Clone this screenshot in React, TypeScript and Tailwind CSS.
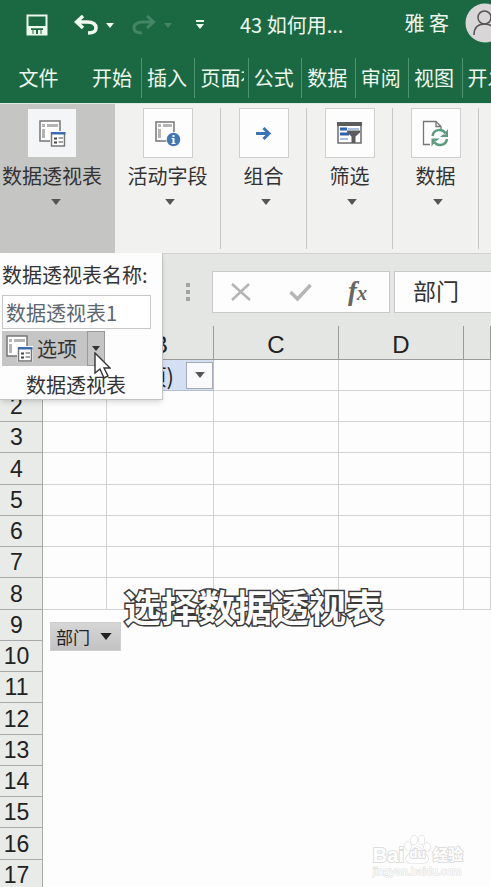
import React, { useState } from "react";

const tabs = ["插入", "页面布局", "公式", "数据", "审阅", "视图", "开发工具"];
const columns = ["A", "B", "C", "D", "E"];
const gridRows = [1, 2, 3, 4, 5, 6, 7, 8];
const chartRows = [9, 10, 11, 12, 13, 14, 15, 16, 17];

const Caret = ({ className = "w-2 h-[5px]" }: { className?: string }) => (
  <svg viewBox="0 0 8 5" className={`fill-current shrink-0 ${className}`}>
    <path d="M0 0h8L4 5z" />
  </svg>
);

const PivotIcon = () => (
  <svg viewBox="0 0 27 27" className="w-[27px] h-[27px] shrink-0" fill="none">
    <path d="M1 1h20v20H1z" fill="#fff" stroke="#767676" strokeWidth="1.5" />
    <path d="M3 4h3v3H3zM8 4h11v3H8zM3 9h3v9H3z" fill="#b4b4b4" />
    <path d="M11 11h16v16H11z" fill="#fff" />
    <path d="M12.500 13h13v13h-13z" fill="#fff" stroke="#767676" strokeWidth="1.5" />
    <path d="M12 12h14.500v2.500H12z" fill="#3c6cb0" />
    <path d="M15 18.500h3M15 22.500h3" stroke="#444" strokeWidth="2" />
    <path d="M19.500 18h4.500M19.500 22h4.500" stroke="#888" strokeWidth="1.500" />
  </svg>
);

const FieldIcon = () => (
  <svg viewBox="0 0 27 27" className="w-[27px] h-[27px]" fill="none">
    <path d="M2 2h18v19H2z" fill="#fff" stroke="#767676" strokeWidth="1.5" />
    <path d="M4 4h3v3H4zM9 4h9v3H9zM4 9h3v9H4z" fill="#b4b4b4" />
    <circle cx="19.500" cy="19.500" r="7.500" fill="#fff" />
    <circle cx="19.500" cy="19.500" r="6.800" fill="#3f78b5" />
    <path d="M18.500 15h2v2h-2zM17.500 18h3v5h1v1h-4v-1h1v-4h-1z" fill="#fff" />
  </svg>
);

const GroupIcon = () => (
  <svg viewBox="0 0 27 27" className="w-[27px] h-[27px]" fill="none" stroke="#3a74b4" strokeWidth="3">
    <path d="M6 13.500h13M13.500 8l5.500 5.500-5.500 5.500" />
  </svg>
);

const FilterIcon = () => (
  <svg viewBox="0 0 27 27" className="w-[27px] h-[27px]" fill="none">
    <path d="M2 3h23v20H2z" fill="#fff" stroke="#6c6c6c" strokeWidth="1.5" />
    <path d="M1 2h25v4H1z" fill="#5c5c5c" />
    <path d="M4 9h7M4 14h9" stroke="#2f62b5" strokeWidth="3" />
    <path d="M4 19h8M12 9h11" stroke="#a9bfe6" strokeWidth="2" />
    <path d="M11 10.500h13v2l-4.500 4V23h-4v-6.500l-4.500-4z" fill="#5c5c5c" />
  </svg>
);

const RefreshIcon = () => (
  <svg viewBox="0 0 27 27" className="w-[27px] h-[27px]" fill="none">
    <path d="M8 24.500H1.500V1.500H14l5 5V9M14 1.500v5h5" stroke="#777" strokeWidth="1.300" />
    <path d="M10.500 16a7 7 0 0 1 13-2.500M25 19a7 7 0 0 1-13 2.500" stroke="#5a9c7d" strokeWidth="2.500" />
    <path d="M26 9v8h-8l3-2.500h2.500V12zM9.500 26.500v-8h8l-3 2.500H12v2.500z" fill="#5a9c7d" />
  </svg>
);

const groups = [
  { label: "活动字段", icon: <FieldIcon />, width: "w-[106px]" },
  { label: "组合", icon: <GroupIcon />, width: "w-[86px]" },
  { label: "筛选", icon: <FilterIcon />, width: "w-[86px]" },
  { label: "数据", icon: <RefreshIcon />, width: "w-[86px]" },
];

const TitleBar = () => (
  <div className="h-[50px] flex items-center pl-[26px] overflow-hidden">
    <button aria-label="保存" className="shrink-0">
      <svg viewBox="0 0 22 22" className="w-[22px] h-[22px]" fill="none">
        <path d="M1.500 1.500h19v19h-19z" stroke="#eef7ee" strokeWidth="2" />
        <path d="M2 12h18v2.500H2zM2 14h3v7H2zM17 14h3v7h-3zM5 16h12v5H5z" fill="#eef7ee" />
        <path d="M5 14.500h12V16H5zM6.500 16h1v4h-1zM10 16h2v4h-2zM14.500 16h1v4h-1z" fill="#1b6943" />
      </svg>
    </button>
    <button aria-label="撤消" className="ml-[26px] flex items-center gap-2 text-[#f0f8f0] shrink-0">
      <svg viewBox="0 0 24 20" className="w-6 h-5" fill="none" stroke="currentColor" strokeWidth="3.500">
        <path d="M9 1L2.500 7L9 13M3 7h10c6 0 9 2 9 6s-3 5-8 5" />
      </svg>
      <Caret />
    </button>
    <button aria-label="恢复" className="ml-[18px] flex items-center gap-2 text-[#438565] shrink-0">
      <svg viewBox="0 0 24 20" className="w-6 h-5" fill="none" stroke="currentColor" strokeWidth="3">
        <path d="M15 1L21.500 7L15 13M21 7H11c-6 0-9 2-9 6s3 5 8 5" />
      </svg>
      <Caret />
    </button>
    <button aria-label="自定义快速访问工具栏" className="ml-6 text-[#eef7ee] shrink-0">
      <svg viewBox="0 0 8 10" className="w-2 h-[10px]" fill="currentColor">
        <path d="M0 0h8v2H0zM0 4h8L4 9z" />
      </svg>
    </button>
    <span className="ml-9 text-[20px] leading-7 text-[#eef7ee] whitespace-nowrap">43 如何用...</span>
    <span className="ml-auto mr-4 pb-1 text-[20px] leading-7 text-[#eef7ee] whitespace-nowrap">雅 客</span>
    <svg viewBox="0 0 40 40" className="w-10 h-10 -mr-[14px] -mt-1 shrink-0" fill="none" stroke="#555" strokeWidth="1.500">
      <circle cx="20" cy="20" r="19.500" fill="#d8d6d6" stroke="none" />
      <circle cx="19.500" cy="14.500" r="6.500" />
      <path d="M9 32c0-8 4-11 10.500-11S30 24 30 32" />
    </svg>
  </div>
);

const TabBar = () => (
  <nav className="h-[53px] flex pt-2 pb-[5px] text-[20px] leading-[36px] text-[#eef7ee] overflow-hidden">
    <button className="w-[77px] shrink-0">文件</button>
    <button className="w-16 pl-[15px] text-left shrink-0">开始</button>
    <div className="flex flex-1 -mr-6 min-w-0">
      {tabs.map((tab) => (
        <button
          key={tab}
          className="flex-1 min-w-0 border-l border-[#4f9470] pl-[5px] pr-1 text-left"
        >
          <span className="block overflow-hidden whitespace-nowrap">{tab}</span>
        </button>
      ))}
    </div>
  </nav>
);

const Ribbon = () => (
  <div className="h-[151px] flex bg-[#f1f1f0] border-t border-b border-t-[#dfe8e0] border-b-[#d2d2d2] text-[#333] text-[20px] overflow-hidden">
    <button className="w-[115px] shrink-0 bg-[#c5c5c4] pt-[5px] pr-[11px] flex flex-col items-center">
      <span className="w-12 h-12 bg-[#f4f5f6] flex items-center justify-center">
        <PivotIcon />
      </span>
      <span className="mt-1 leading-[30px] whitespace-nowrap">数据透视表</span>
      <Caret className="mt-2 ml-2 w-[10px] h-[6px] text-[#555]" />
    </button>
    {groups.map((group) => (
      <div key={group.label} className={`${group.width} shrink-0 border-r border-[#c6c6c6] my-1`}>
        <button className="w-full flex flex-col items-center">
          <span className="w-[50px] h-[50px] bg-[#fdfdfd] border border-[#cfcfcf] flex items-center justify-center">
            {group.icon}
          </span>
          <span className="mt-[3px] leading-[30px] whitespace-nowrap">{group.label}</span>
          <Caret className="mt-2 ml-1 w-[10px] h-[6px] text-[#555]" />
        </button>
      </div>
    ))}
  </div>
);

const PivotMenu = () => {
  const [name, setName] = useState("数据透视表1");

  return (
    <div className="absolute left-0 top-[253px] z-10 w-[163px] h-[147px] bg-[#fdfdfd] border-r border-b border-[#c3c3c3] shadow-md text-[20px] text-[#333] pl-[2px] pt-2">
      <label htmlFor="pivot-name" className="block leading-7 whitespace-nowrap">
        数据透视表名称:
      </label>
      <input
        id="pivot-name"
        value={name}
        onChange={(e) => setName(e.target.value)}
        className="mt-[6px] block w-[149px] h-[34px] border border-[#c6c6c6] bg-white px-[3px] text-[#5c6670]"
      />
      <div className="mt-[2px] flex w-[103px] h-[35px] bg-[#c5c5c5] text-[#333]">
        <button className="w-[85px] flex items-center pl-1 gap-1 whitespace-nowrap">
          <PivotIcon />
          选项
        </button>
        <button aria-label="选项菜单" className="flex-1 border border-[#999] flex items-center justify-center">
          <Caret />
        </button>
      </div>
      <div className="pl-6 pt-1 leading-[30px] whitespace-nowrap">数据透视表</div>
      <svg viewBox="0 0 17 27" className="absolute left-[94px] top-[99px] w-[17px] h-[27px]">
        <path d="M1 1v20l5-4 4 9 4-2-4-8h6z" fill="#fff" stroke="#333" strokeWidth="1.400" />
      </svg>
    </div>
  );
};

const FormulaBar = () => {
  const [formula, setFormula] = useState("部门");

  return (
    <div className="h-[72px] flex pt-[17px] bg-[#e4e6e4]">
      <svg viewBox="0 0 4 18" className="ml-[186px] mt-3 w-1 h-[18px] shrink-0" fill="#a3a3a3">
        <path d="M0 0h4v4H0zM0 7h4v4H0zM0 14h4v4H0z" />
      </svg>
      <div className="ml-[22px] w-[178px] h-[42px] shrink-0 bg-[#fdfdfd] border border-[#cacaca] flex items-center pl-[18px] text-[#b5b5b5]">
        <button aria-label="取消">
          <svg viewBox="0 0 20 20" className="w-5 h-5" fill="none" stroke="currentColor" strokeWidth="2.500">
            <path d="M1 2l18 16M18 2L1 18" />
          </svg>
        </button>
        <button aria-label="输入" className="ml-[38px]">
          <svg viewBox="0 0 23 20" className="w-[23px] h-5" fill="none" stroke="currentColor" strokeWidth="3.500">
            <path d="M1.500 10l7 7L21.500 3" />
          </svg>
        </button>
        <button className="ml-9 font-['Liberation_Serif',serif] italic font-bold text-[27px] leading-8 text-[#666]">
          f<span className="text-[20px]">x</span>
        </button>
      </div>
      <input
        aria-label="编辑栏"
        value={formula}
        onChange={(e) => setFormula(e.target.value)}
        className="ml-1 flex-1 min-w-0 h-[42px] border border-r-0 border-[#cacaca] bg-[#fdfdfd] pl-[18px] pb-1 text-[23px] text-[#333]"
      />
    </div>
  );
};

const RowHead = ({ row }: { row: number }) => (
  <th
    scope="row"
    className="p-0 pr-[9px] bg-[#e9ebe9] border-r border-b border-[#a9a9a9] font-normal text-[23px] leading-[30px] text-center"
  >
    {row}
  </th>
);

const Sheet = () => (
  <table className="w-full table-fixed border-separate border-spacing-0 bg-[#fdfdfd] font-['Liberation_Sans',sans-serif] text-[#222]">
    <colgroup>
      <col className="w-[43px]" />
      <col className="w-16" />
      <col className="w-[107px]" />
      <col className="w-[125px]" />
      <col className="w-[125px]" />
      <col />
    </colgroup>
    <thead>
      <tr className="h-[34px] bg-[#e4e6e4]">
        <td className="border-b border-[#8f8f8f]" />
        {columns.map((col) => (
          <th
            key={col}
            scope="col"
            className="p-0 pt-1 border-r border-b border-[#9b9b9b] font-normal text-[24px] leading-7 overflow-hidden"
          >
            {col !== "E" && col}
          </th>
        ))}
      </tr>
    </thead>
    <tbody>
      {gridRows.map((row) => (
        <tr key={row} className="h-[31px] nth-[4n]:h-8">
          <RowHead row={row} />
          {columns.map((col) =>
            row === 1 && col === "B" ? (
              <td key={col} className="p-0 bg-[#d5dff3] border-r border-b border-[#b4bfd4]">
                <div className="flex items-center justify-end gap-3 font-['Noto_Sans_CJK_SC',sans-serif] text-[22px] leading-[30px] whitespace-nowrap">
                  (多项)
                  <button
                    aria-label="筛选"
                    className="w-[27px] h-[27px] bg-[#fafafc] border border-[#a5abb8] flex items-center justify-center text-[#555]"
                  >
                    <Caret className="w-[10px] h-[6px]" />
                  </button>
                </div>
              </td>
            ) : (
              <td key={col} className="p-0 border-r border-b border-[#d2d3d2]" />
            )
          )}
        </tr>
      ))}
    </tbody>
    <tbody>
      {chartRows.map((row) => (
        <tr key={row} className="h-[31px] nth-[4n]:h-8">
          <RowHead row={row} />
          {row === 9 && (
            <td colSpan={5} rowSpan={chartRows.length} className="p-0 pl-[7px] pt-3 align-top">
              <button className="w-[71px] h-[29px] flex items-center justify-between pl-[5px] pr-2 bg-linear-to-b from-[#d6d6d6] to-[#c2c2c2] border border-[#cfcfcf] font-['Noto_Sans_CJK_SC',sans-serif] text-[17px] text-[#222]">
                部门
                <Caret className="w-3 h-[7px]" />
              </button>
            </td>
          )}
        </tr>
      ))}
    </tbody>
  </table>
);

const Watermark = () => (
  <div className="absolute right-7 bottom-[9px] text-[#fff] [paint-order:stroke_fill] [-webkit-text-stroke:2px_#dedede] leading-none">
    <div className="flex items-end font-bold whitespace-nowrap">
      <span className="font-['Liberation_Sans',sans-serif] text-[20px] leading-[18px]">Bai</span>
      <div className="relative w-[27px] h-[29px]">
        <svg viewBox="0 0 27 29" className="w-[27px] h-[29px]" fill="#fff" stroke="#d8d8d8" strokeWidth="1.200">
          <ellipse cx="4" cy="11" rx="3" ry="4" />
          <ellipse cx="10" cy="5" rx="3" ry="4.500" />
          <ellipse cx="17.500" cy="5" rx="3" ry="4.500" />
          <ellipse cx="23" cy="12" rx="3" ry="4" />
          <path d="M13.500 12c4 0 5 4 8 7 5 5 2 9-2 9H7c-5 0-7-5-2-9 3-3 4.500-7 8.500-7z" />
        </svg>
        <span className="absolute inset-x-0 bottom-1 text-center font-['Liberation_Sans',sans-serif] text-[13px]">du</span>
      </div>
      <span className="ml-[2px] text-[15px] leading-[20px]">经验</span>
    </div>
    <div className="font-['Liberation_Sans',sans-serif] text-[11px] leading-[14px] [-webkit-text-stroke:1px_#dedede]">
      jingyan.baidu.com
    </div>
  </div>
);

const App = () => {
  return (
    <div className="relative h-screen w-full overflow-hidden bg-[#fdfdfd] font-['Noto_Sans_CJK_SC',sans-serif]">
      <header className="bg-[#1b6943]">
        <TitleBar />
        <TabBar />
      </header>
      <Ribbon />
      <FormulaBar />
      <Sheet />
      <PivotMenu />
      <p className="absolute inset-x-0 top-[580px] pl-4 text-center text-[37px] leading-[52px] font-bold text-white whitespace-nowrap [paint-order:stroke_fill] [-webkit-text-stroke:3px_#3a3a3a]">
        选择数据透视表
      </p>
      <Watermark />
    </div>
  );
};
export default App;
